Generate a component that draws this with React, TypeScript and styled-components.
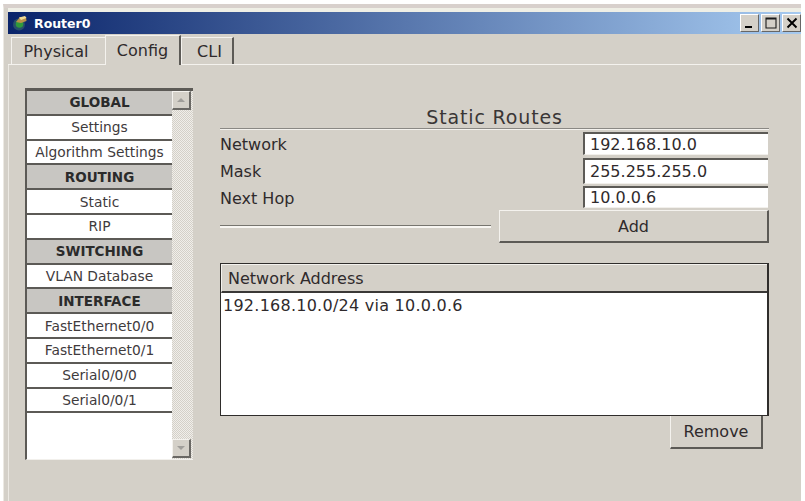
import React from 'react';
import styled, { createGlobalStyle } from 'styled-components';

const GlobalStyle = createGlobalStyle`
  html, body {
    margin: 0;
    padding: 0;
    background: #ffffff;
  }
  * {
    box-sizing: border-box;
  }
`;

const menuRows = [
  { label: 'GLOBAL', heading: true },
  { label: 'Settings' },
  { label: 'Algorithm Settings' },
  { label: 'ROUTING', heading: true },
  { label: 'Static' },
  { label: 'RIP' },
  { label: 'SWITCHING', heading: true },
  { label: 'VLAN Database' },
  { label: 'INTERFACE', heading: true },
  { label: 'FastEthernet0/0' },
  { label: 'FastEthernet0/1' },
  { label: 'Serial0/0/0' },
  { label: 'Serial0/0/1' },
];

const fields = [
  { label: 'Network', value: '192.168.10.0', height: 23 },
  { label: 'Mask', value: '255.255.255.0', height: 26 },
  { label: 'Next Hop', value: '10.0.0.6', height: 22 },
];

const App: React.FC = () => {
  return (
    <Page>
      <GlobalStyle />
      <Window>
        <TopEdge />
        <TitleBar>
          <TitleLeft>
            <svg width="18" height="18" viewBox="0 0 18 18">
              <circle cx="8" cy="10.5" r="6" fill="#27506a" />
              <circle cx="8.5" cy="10" r="3.8" fill="#2f9a3c" />
              <path d="M5 8 L9 3 L15 3 L15.5 7 L10 9 Z" fill="#b8924a" />
              <path d="M8 3.5 L14 2 L15.5 4 L10 6 Z" fill="#f2dc96" />
            </svg>
            <TitleText>Router0</TitleText>
          </TitleLeft>
          <WindowButtons>
            <WindowButton>
              <svg width="12" height="12" viewBox="0 0 12 12">
                <rect x="1" y="9" width="7" height="2" fill="#000" />
              </svg>
            </WindowButton>
            <WindowButton>
              <svg width="14" height="12" viewBox="0 0 14 12">
                <path d="M2 1 H12 V11 H2 Z M2 2 H12" fill="none" stroke="#1a1a1a" strokeWidth="1.1" />
              </svg>
            </WindowButton>
            <WindowButton>
              <svg width="14" height="12" viewBox="0 0 14 12">
                <path d="M2.5 1.5 L11.5 10.5 M11.5 1.5 L2.5 10.5" stroke="#000" strokeWidth="1.9" />
              </svg>
            </WindowButton>
          </WindowButtons>
        </TitleBar>

        <TabBar>
          <Tab $width={94} $inset={5}>Physical</Tab>
          <Tab $width={76} $active>Config</Tab>
          <Tab $width={53} $inset={-5}>CLI</Tab>
        </TabBar>

        <Body>
          <Sidebar>
            <MenuList>
              {menuRows.map((row) => (
                <MenuRow key={row.label} $heading={row.heading}>
                  {row.label}
                </MenuRow>
              ))}
            </MenuList>
            <ScrollTrack>
              <ScrollButton>
                <ScrollArrow $up />
              </ScrollButton>
              <ScrollButton>
                <ScrollArrow />
              </ScrollButton>
            </ScrollTrack>
          </Sidebar>

          <Main>
            <PanelTitle>Static Routes</PanelTitle>
            <FieldGroup>
              {fields.map((field) => (
                <FieldRow key={field.label} $height={field.height}>
                  <FieldLabel>{field.label}</FieldLabel>
                  <FieldInput>{field.value}</FieldInput>
                </FieldRow>
              ))}
            </FieldGroup>
            <AddRow>
              <Rule />
              <AddButton>Add</AddButton>
            </AddRow>
            <RouteTable>
              <TableHeader>Network Address</TableHeader>
              <TableBody>192.168.10.0/24 via 10.0.0.6</TableBody>
            </RouteTable>
            <RemoveRow>
              <RemoveButton>Remove</RemoveButton>
            </RemoveRow>
          </Main>
        </Body>
      </Window>
    </Page>
  );
};

const Page = styled.div`
  width: 805px;
  height: 501px;
  padding: 4px 4px 0 3px;
  overflow: hidden;
  font-family: 'DejaVu Sans', Verdana, sans-serif;
  color: #2f2a2c;
`;

const Window = styled.div`
  height: 497px;
  display: flex;
  flex-direction: column;
  background: #d4d0c8;
  padding-left: 4px;
  border-top: 4px solid #d8d0cc;
  border-left: 1px solid #ece9e3;
`;

const TopEdge = styled.div`
  height: 4px;
  background: #efefe6;
`;

const TitleBar = styled.div`
  height: 22px;
  display: flex;
  align-items: center;
  justify-content: space-between;
  padding: 0 0 0 3px;
  background: linear-gradient(90deg, #0a246a 0%, #a6caf0 100%);
`;

const TitleLeft = styled.div`
  display: flex;
  align-items: center;
  gap: 5px;
`;

const TitleText = styled.span`
  font-family: Tahoma, 'DejaVu Sans', sans-serif;
  font-size: 12.5px;
  font-weight: 700;
  color: #ffffff;
`;

const WindowButtons = styled.div`
  display: flex;
  gap: 2px;
`;

const WindowButton = styled.div`
  width: 19px;
  height: 18px;
  display: flex;
  align-items: center;
  justify-content: center;
  background: #d4d0c8;
  border-top: 1px solid #ffffff;
  border-left: 1px solid #ffffff;
  border-right: 1px solid #666;
  border-bottom: 1px solid #666;
`;

const TabBar = styled.div`
  height: 31px;
  display: flex;
  align-items: flex-end;
  padding-left: 3px;
  border-bottom: 1px solid #f4f2ee;
`;

const Tab = styled.div<{ $active?: boolean; $width: number; $inset?: number }>`
  width: ${({ $width }) => $width}px;
  height: ${({ $active }) => ($active ? '30px' : '27px')};
  margin-bottom: ${({ $active }) => ($active ? '-1px' : '0')};
  padding-right: ${({ $inset }) => ($inset && $inset > 0 ? $inset : 0)}px;
  padding-left: ${({ $inset }) => ($inset && $inset < 0 ? -$inset : 0)}px;
  display: flex;
  align-items: center;
  justify-content: center;
  font-size: 16px;
  background: #d4d0c8;
  border-top: 1px solid #f4f2ee;
  border-left: 1px solid #f4f2ee;
  border-right: 2px solid #5c5a56;
  position: relative;
  &:first-child {
    border-right: none;
  }
`;

const Body = styled.div`
  flex: 1;
  display: flex;
  align-items: flex-start;
  padding: 23px 0 0 16px;
  gap: 27px;
  border-left: 1px solid #ece9e3;
`;

const Sidebar = styled.div`
  width: 168px;
  height: 372px;
  display: flex;
  border-top: 3px solid #5c5a56;
  border-left: 2px solid #5c5a56;
  border-bottom: 1px solid #f2f0ec;
  background: #ffffff;
`;

const MenuList = styled.div`
  width: 145px;
  display: flex;
  flex-direction: column;
`;

const MenuRow = styled.div<{ $heading?: boolean }>`
  height: 24.8px;
  display: flex;
  align-items: center;
  justify-content: center;
  font-size: ${({ $heading }) => ($heading ? '13.5px' : '13.8px')};
  font-weight: ${({ $heading }) => ($heading ? 700 : 400)};
  color: ${({ $heading }) => ($heading ? '#2b2b2b' : '#3f3b3d')};
  background: ${({ $heading }) => ($heading ? '#c8c6c2' : '#ffffff')};
  border-bottom: 2px solid #5c5a56;
  white-space: nowrap;
`;

const ScrollTrack = styled.div`
  flex: 1;
  display: flex;
  flex-direction: column;
  justify-content: space-between;
  background-color: #dcdad6;
  background-image: repeating-conic-gradient(#d4d0c8 0 25%, #f0eeea 0 50%);
  background-size: 2px 2px;
  padding-bottom: 1px;
`;

const ScrollButton = styled.div`
  width: 19px;
  height: 19px;
  display: flex;
  align-items: center;
  justify-content: center;
  background: #d4d0c8;
  border-top: 1px solid #f4f2ee;
  border-left: 1px solid #f4f2ee;
  border-right: 2px solid #6a6864;
  border-bottom: 2px solid #6a6864;
`;

const ScrollArrow = styled.div<{ $up?: boolean }>`
  width: 0;
  height: 0;
  border-left: 4px solid transparent;
  border-right: 4px solid transparent;
  border-bottom: ${({ $up }) => ($up ? '4px solid #a09e9a' : 'none')};
  border-top: ${({ $up }) => ($up ? 'none' : '4px solid #a09e9a')};
`;

const Main = styled.div`
  width: 549px;
  display: flex;
  flex-direction: column;
`;

const PanelTitle = styled.div`
  height: 42px;
  padding-top: 18px;
  text-align: center;
  font-size: 19px;
  letter-spacing: 0.85px;
  line-height: 22px;
  color: #3a3636;
  border-bottom: 1px solid #f4f2ee;
  box-shadow: inset 0 -1px 0 #8a8884;
  white-space: nowrap;
`;

const FieldGroup = styled.div`
  display: flex;
  flex-direction: column;
  gap: 2.5px;
  padding-top: 2px;
`;

const FieldRow = styled.div<{ $height: number }>`
  height: ${({ $height }) => $height}px;
  display: flex;
  align-items: center;
  justify-content: space-between;
  padding-right: 1px;
`;

const FieldLabel = styled.span`
  font-size: 16px;
  padding-top: 2px;
`;

const FieldInput = styled.div`
  width: 185px;
  height: 100%;
  display: flex;
  align-items: center;
  padding-left: 5px;
  font-size: 16px;
  background: #ffffff;
  border-top: 2px solid #5c5a56;
  border-left: 2px solid #5c5a56;
  border-bottom: 1px solid #f2f0ec;
`;

const AddRow = styled.div`
  height: 33px;
  margin-top: 2px;
  display: flex;
  align-items: center;
  gap: 8px;
`;

const Rule = styled.div`
  width: 271px;
  height: 3px;
  background: #f8f6f2;
  border-top: 1px solid #77756f;
`;

const AddButton = styled.div`
  flex: 1;
  height: 100%;
  display: flex;
  align-items: center;
  justify-content: center;
  font-size: 16px;
  background: #d4d0c8;
  border-top: 1px solid #f4f2ee;
  border-left: 1px solid #f4f2ee;
  border-right: 2px solid #5c5a56;
  border-bottom: 2px solid #5c5a56;
`;

const RouteTable = styled.div`
  margin-top: 20px;
  height: 153px;
  display: flex;
  flex-direction: column;
  border: 1px solid #2f2d2b;
  border-right-width: 2px;
  background: #ffffff;
`;

const TableHeader = styled.div`
  height: 29px;
  display: flex;
  align-items: center;
  padding-left: 6px;
  font-size: 16px;
  background: #d4d0c8;
  border-top: 1px solid #f4f2ee;
  border-left: 1px solid #f4f2ee;
  border-bottom: 2px solid #3a3836;
`;

const TableBody = styled.div`
  flex: 1;
  padding: 3px 2px;
  font-size: 16px;
  letter-spacing: 0.25px;
  line-height: 20px;
`;

const RemoveRow = styled.div`
  display: flex;
  justify-content: flex-end;
  padding-right: 6px;
`;

const RemoveButton = styled.div`
  width: 93px;
  height: 33px;
  display: flex;
  align-items: center;
  justify-content: center;
  font-size: 16px;
  background: #d4d0c8;
  border-left: 1px solid #f4f2ee;
  border-right: 2px solid #5c5a56;
  border-bottom: 2px solid #5c5a56;
`;

export default App;
